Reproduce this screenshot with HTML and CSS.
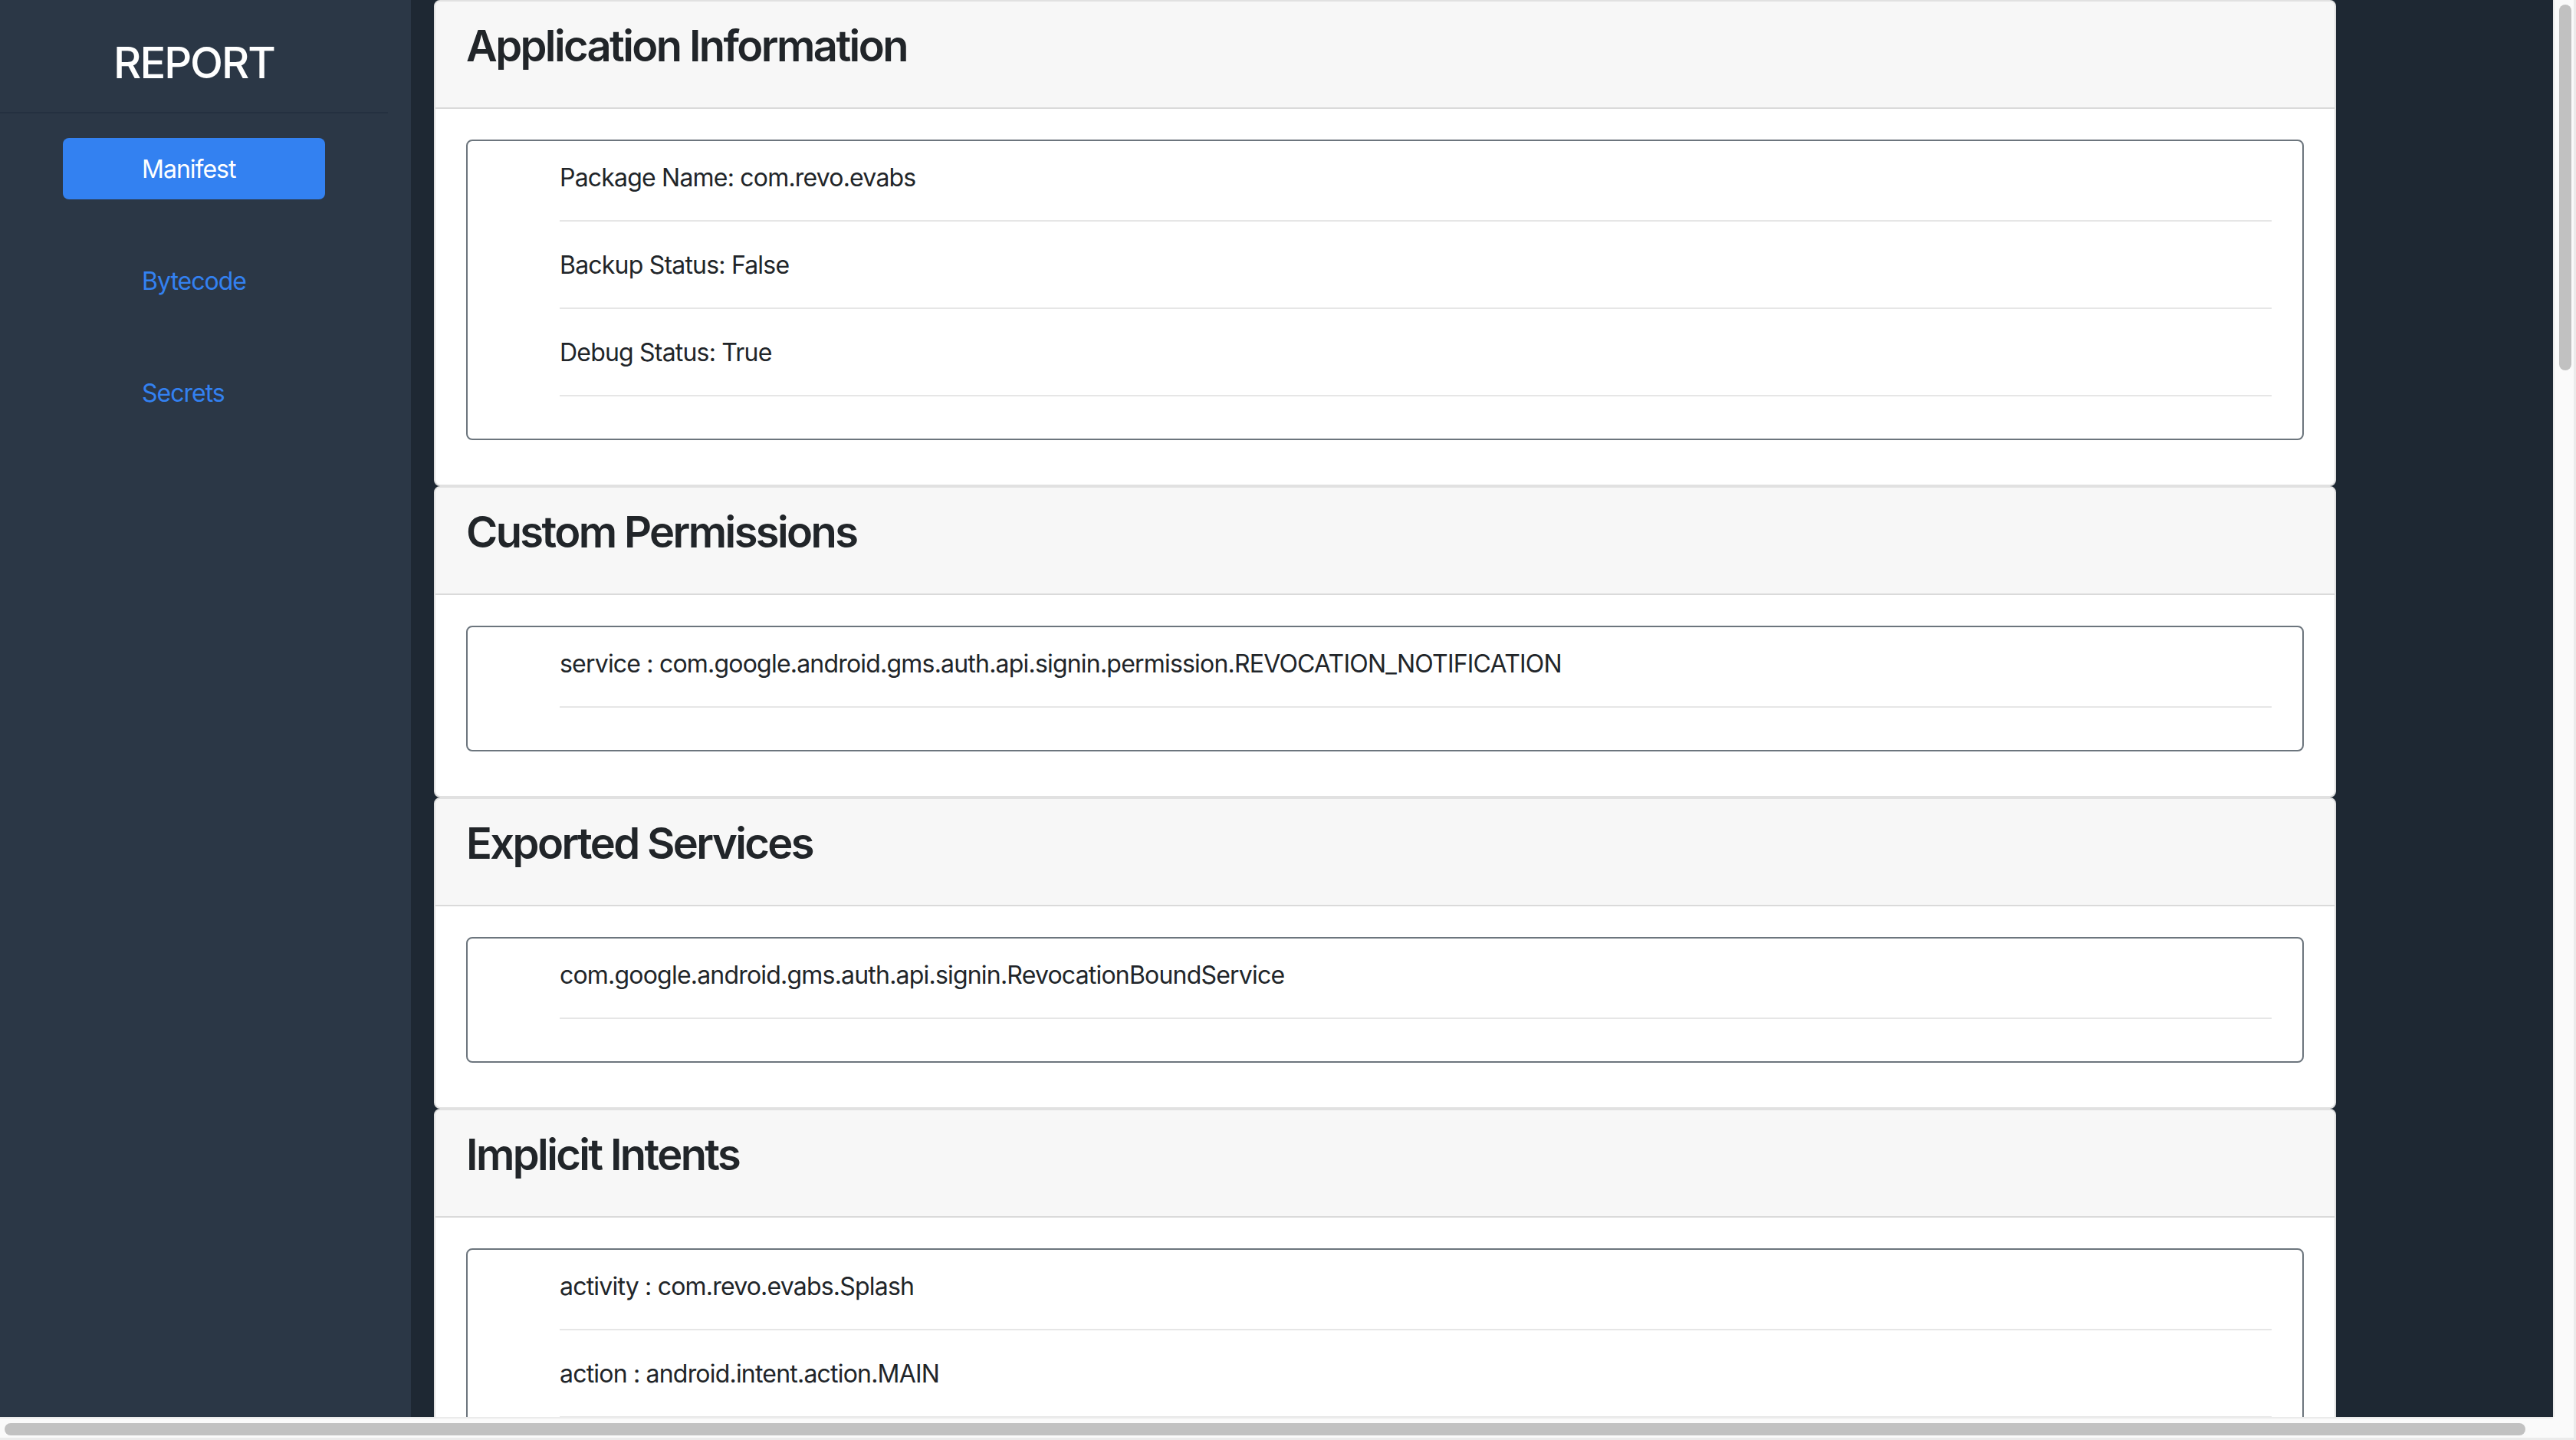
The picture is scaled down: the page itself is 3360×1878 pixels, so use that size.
FILE: index.html
```html
<!DOCTYPE html>
<html lang="en">
<head>
<meta charset="utf-8">
<title>Report</title>
<link rel="stylesheet" href="styles.css">
</head>
<body>
<div class="window">
  <div class="viewport">
    <div class="page">
      <aside class="sidebar">
        <div class="sidebar-inner">
          <h1 class="brand">REPORT</h1>
          <ul class="nav">
            <li><a class="nav-link active" href="#">Manifest</a></li>
            <li><a class="nav-link" href="#">Bytecode</a></li>
            <li><a class="nav-link" href="#">Secrets</a></li>
          </ul>
        </div>
      </aside>
      <main class="main">
        <section class="card">
          <div class="card-header"><h3>Application Information</h3></div>
          <div class="card-body">
            <div class="box">
              <ul class="items">
                <li>Package Name: com.revo.evabs</li>
                <li>Backup Status: False</li>
                <li>Debug Status: True</li>
              </ul>
            </div>
          </div>
        </section>
        <section class="card">
          <div class="card-header"><h3>Custom Permissions</h3></div>
          <div class="card-body">
            <div class="box">
              <ul class="items">
                <li>service : com.google.android.gms.auth.api.signin.permission.REVOCATION_NOTIFICATION</li>
              </ul>
            </div>
          </div>
        </section>
        <section class="card">
          <div class="card-header"><h3>Exported Services</h3></div>
          <div class="card-body">
            <div class="box">
              <ul class="items">
                <li>com.google.android.gms.auth.api.signin.RevocationBoundService</li>
              </ul>
            </div>
          </div>
        </section>
        <section class="card">
          <div class="card-header"><h3>Implicit Intents</h3></div>
          <div class="card-body">
            <div class="box">
              <ul class="items">
                <li>activity : com.revo.evabs.Splash</li>
                <li>action : android.intent.action.MAIN</li>
                <li>category : android.intent.category.LAUNCHER</li>
              </ul>
            </div>
          </div>
        </section>
      </main>
    </div>
  </div>
  <div class="vscroll"><div class="vthumb"></div></div>
  <div class="hscroll"><div class="hthumb"></div></div>
  <div class="corner"></div>
</div>
</body>
</html>
```
FILE: styles.css
```css
html,
body {
  height: 100%;
}

body {
  margin: 0;
  overflow: hidden;
  font-family: "Inter", "Liberation Sans", "DejaVu Sans", sans-serif;
  color: #212529;
  background: #1e2833;
}

/* Browser frame with scrollbars */
.window {
  display: grid;
  grid-template-columns: 1fr 27px;
  grid-template-rows: 1fr 27px;
  width: 100vw;
  height: 100vh;
  box-sizing: border-box;
  border-right: 3px solid #ebebeb;
  border-bottom: 3px solid #ebebeb;
  background: #fafafa;
}

.viewport {
  overflow: hidden;
  background: #1e2833;
}

.vscroll {
  background: #fafafa;
  border-left: 2px solid #ebebeb;
  padding: 6px 3px 0 6px;
}

.vthumb {
  height: 477px;
  background: #c1c1c1;
  border-radius: 8px;
}

.hscroll {
  background: #fafafa;
  border-top: 2px solid #ebebeb;
  padding: 6px 0 3px 6px;
}

.hthumb {
  width: 3288px;
  height: 16px;
  background: #c1c1c1;
  border-radius: 8px;
}

.corner {
  background: #fafafa;
}

/* Page */
.page {
  display: flex;
  align-items: stretch;
  width: 3375px;
  min-height: 100%;
}

/* Sidebar */
.sidebar {
  flex: none;
  width: 536px;
  background: #2b3746;
}

.sidebar-inner {
  width: 506px;
}

.brand {
  margin: 0;
  padding: 49px 0 30px;
  text-align: center;
  font-size: 56px;
  line-height: 67px;
  font-weight: 500;
  letter-spacing: -2px;
  color: #ffffff;
  border-bottom: 2px solid #243040;
}

.nav {
  list-style: none;
  margin: 32px 0 0;
  padding: 0;
  display: flex;
  flex-direction: column;
  align-items: center;
  gap: 66px;
}

.nav-link {
  display: block;
  width: 342px;
  box-sizing: border-box;
  padding: 17px 0 15px 103px;
  font-size: 32px;
  line-height: 48px;
  letter-spacing: -1px;
  color: #3381f1;
  text-decoration: none;
  border-radius: 8px;
}

.nav-link.active {
  background: #3381f1;
  color: #ffffff;
}

/* Main */
.main {
  flex: none;
  width: 2839px;
  box-sizing: border-box;
  padding-left: 30px;
}

.card {
  width: 2481px;
  box-sizing: border-box;
  background: #ffffff;
  border: 2px solid #e1e1e1;
  border-radius: 8px;
}

.card-header {
  background: #f7f7f7;
  padding: 25px 40px 46px;
  border-bottom: 2px solid #dadada;
  border-radius: 6px 6px 0 0;
}

.card-header h3 {
  margin: 0;
  font-size: 56px;
  line-height: 67px;
  font-weight: 600;
  letter-spacing: -2.6px;
  color: #212529;
}

.card-body {
  padding: 40px 40px 58px;
}

.box {
  border: 2px solid #6c757d;
  border-radius: 8px;
  padding: 24px 40px 55px;
}

.items {
  list-style: none;
  margin: 0;
  padding: 0 0 0 80px;
  display: flex;
  flex-direction: column;
  gap: 33px;
}

.items li {
  font-size: 32px;
  line-height: 48px;
  letter-spacing: -0.8px;
  padding-bottom: 31px;
  border-bottom: 2px solid #e6e6e6;
  color: #212529;
}
```
